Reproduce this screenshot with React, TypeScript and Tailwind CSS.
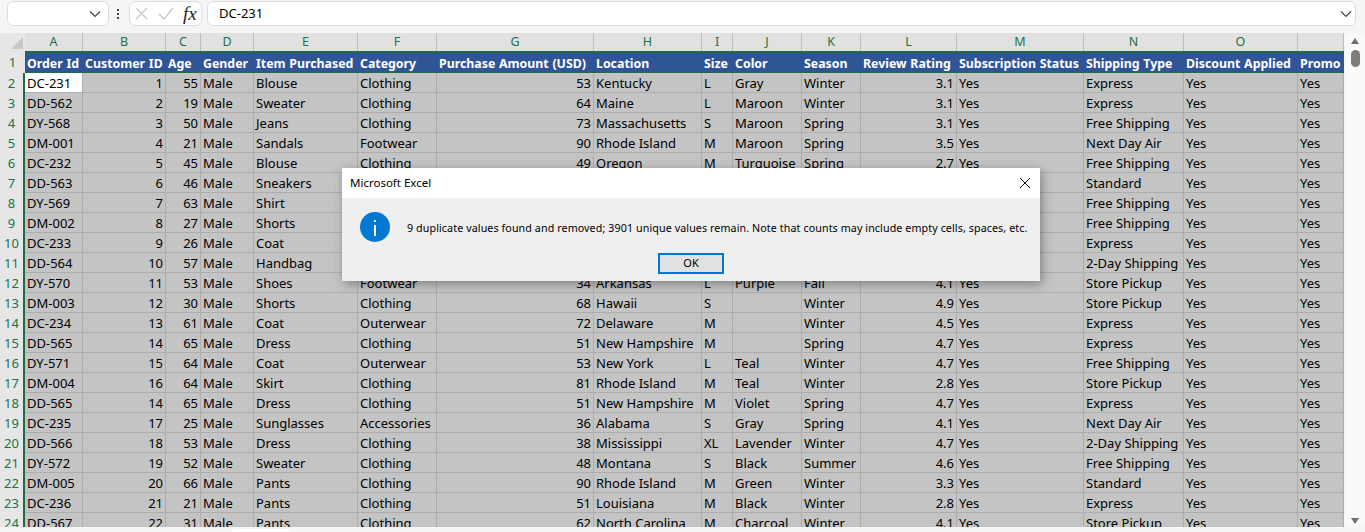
const cols = ['A','B','C','D','E','F','G','H','I','J','K','L','M','N','O',''];
const head = ['Order Id','Customer ID','Age','Gender','Item Purchased','Category','Purchase Amount (USD)','Location','Size','Color','Season','Review Rating','Subscription Status','Shipping Type','Discount Applied','Promo'];
const right = [1,2,6,11];
const rows: string[][] = [
['DC-231','1','55','Male','Blouse','Clothing','53','Kentucky','L','Gray','Winter','3.1','Yes','Express','Yes','Yes'],
['DD-562','2','19','Male','Sweater','Clothing','64','Maine','L','Maroon','Winter','3.1','Yes','Express','Yes','Yes'],
['DY-568','3','50','Male','Jeans','Clothing','73','Massachusetts','S','Maroon','Spring','3.1','Yes','Free Shipping','Yes','Yes'],
['DM-001','4','21','Male','Sandals','Footwear','90','Rhode Island','M','Maroon','Spring','3.5','Yes','Next Day Air','Yes','Yes'],
['DC-232','5','45','Male','Blouse','Clothing','49','Oregon','M','Turquoise','Spring','2.7','Yes','Free Shipping','Yes','Yes'],
['DD-563','6','46','Male','Sneakers','','','','','','','','','Standard','Yes','Yes'],
['DY-569','7','63','Male','Shirt','','','','','','','','','Free Shipping','Yes','Yes'],
['DM-002','8','27','Male','Shorts','','','','','','','','','Free Shipping','Yes','Yes'],
['DC-233','9','26','Male','Coat','','','','','','','','','Express','Yes','Yes'],
['DD-564','10','57','Male','Handbag','','','','','','','','','2-Day Shipping','Yes','Yes'],
['DY-570','11','53','Male','Shoes','Footwear','34','Arkansas','L','Purple','Fall','4.1','Yes','Store Pickup','Yes','Yes'],
['DM-003','12','30','Male','Shorts','Clothing','68','Hawaii','S','','Winter','4.9','Yes','Store Pickup','Yes','Yes'],
['DC-234','13','61','Male','Coat','Outerwear','72','Delaware','M','','Winter','4.5','Yes','Express','Yes','Yes'],
['DD-565','14','65','Male','Dress','Clothing','51','New Hampshire','M','','Spring','4.7','Yes','Express','Yes','Yes'],
['DY-571','15','64','Male','Coat','Outerwear','53','New York','L','Teal','Winter','4.7','Yes','Free Shipping','Yes','Yes'],
['DM-004','16','64','Male','Skirt','Clothing','81','Rhode Island','M','Teal','Winter','2.8','Yes','Store Pickup','Yes','Yes'],
['DD-565','14','65','Male','Dress','Clothing','51','New Hampshire','M','Violet','Spring','4.7','Yes','Express','Yes','Yes'],
['DC-235','17','25','Male','Sunglasses','Accessories','36','Alabama','S','Gray','Spring','4.1','Yes','Next Day Air','Yes','Yes'],
['DD-566','18','53','Male','Dress','Clothing','38','Mississippi','XL','Lavender','Winter','4.7','Yes','2-Day Shipping','Yes','Yes'],
['DY-572','19','52','Male','Sweater','Clothing','48','Montana','S','Black','Summer','4.6','Yes','Free Shipping','Yes','Yes'],
['DM-005','20','66','Male','Pants','Clothing','90','Rhode Island','M','Green','Winter','3.3','Yes','Standard','Yes','Yes'],
['DC-236','21','21','Male','Pants','Clothing','51','Louisiana','M','Black','Winter','2.8','Yes','Express','Yes','Yes'],
['DD-567','22','31','Male','Pants','Clothing','62','North Carolina','M','Charcoal','Winter','4.1','Yes','Store Pickup','Yes','Yes'],
];
const grid = 'grid grid-cols-[25px_58px_83px_35px_53px_104px_79px_157px_108px_31px_69px_59px_96px_127px_100px_114px_46px]';

export default function App() {
  return (
    <div className="relative h-[532px] w-[1365px] overflow-hidden bg-[#f5f5f5] text-[13px] text-black" style={{ fontFamily: '"Noto Sans", sans-serif' }}>
      <div className="flex h-[33px] items-start pt-px">
        <div className="ml-[7px] flex h-[25px] w-[102px] items-center justify-end rounded-md border border-[#dcdcdc] bg-white pr-[7px]">
          <svg width="12" height="8" viewBox="0 0 12 8" fill="none" stroke="#444" strokeWidth="1.2"><path d="M1 1.5l5 5 5-5" /></svg>
        </div>
        <div className="ml-[5px] flex h-[25px] w-[8px] flex-col items-center justify-center gap-[2px]">
          <i className="h-[2px] w-[2px] bg-[#444]" /><i className="h-[2px] w-[2px] bg-[#444]" /><i className="h-[2px] w-[2px] bg-[#444]" />
        </div>
        <div className="ml-[7px] flex h-[25px] w-[73px] items-center rounded-md border border-[#dcdcdc] bg-white pl-[5px]">
          <svg width="13" height="13" viewBox="0 0 13 13" fill="none" stroke="#c4c4c4" strokeWidth="1.2"><path d="M1 1l11 11M12 1L1 12" /></svg>
          <svg className="ml-[10px]" width="16" height="13" viewBox="0 0 16 13" fill="none" stroke="#c4c4c4" strokeWidth="1.2"><path d="M1 7l5 5L15 1" /></svg>
          <span className="ml-[9px] text-[19px] leading-none text-[#222]" style={{ fontFamily: '"Liberation Serif", serif', fontStyle: 'italic' }}>fx</span>
        </div>
        <div className="ml-[5px] flex h-[25px] w-[1149px] items-center justify-between rounded-md border border-[#dcdcdc] bg-white pl-[11px] pr-[3px]">
          <span className="text-[13px]">DC-231</span>
          <svg width="12" height="8" viewBox="0 0 12 8" fill="none" stroke="#444" strokeWidth="1.2"><path d="M1 1.5l5 5 5-5" /></svg>
        </div>
      </div>
      <div className="flex h-[494px] items-start">
        <div className="h-[494px] w-[1344px] shrink-0 overflow-hidden">
          <div className={`${grid} h-[18px] bg-[#e1e1e1] text-[#217346]`}>
            <div className="flex items-end justify-end bg-[#e6e6e6] pb-[2px] pr-[2px]">
              <div className="h-0 w-0 border-b-[12px] border-l-[12px] border-b-[#c8c8c8] border-l-transparent" />
            </div>
            {cols.map((c, i) => (
              <div key={i} className="flex items-center justify-center border-r border-[#bdbdbd] text-[12.5px] leading-none">{c}</div>
            ))}
          </div>
          <div className={`${grid} h-[22px] border-t-2 border-b border-t-[#1f6b45] border-b-[#1f6b45] bg-[#2f5597] text-[12.35px] font-bold leading-[21px] text-white [word-spacing:0.5px]`}>
            <div className="-mt-[2px] -mb-px flex h-[22px] items-center justify-center bg-[#e6e6e6] pt-[1px] text-[13px] font-normal text-[#217346]">1</div>
            {head.map((h, i) => (
              <div key={i} className="overflow-hidden whitespace-nowrap px-[2px]">{h}</div>
            ))}
          </div>
          {rows.map((r, ri) => (
            <div key={ri} className={`${grid} h-[20px] leading-[20px]`}>
              <div className="flex items-center justify-center border-r-2 border-[#1f6b45] bg-[#e6e6e6] text-[#217346]">{ri + 2}</div>
              {r.map((v, i) => (
                <div key={i} className={`overflow-hidden whitespace-nowrap border-b border-r border-[#adadad] px-[2px] ${ri === 0 && i === 0 ? 'bg-white' : 'bg-[#c4c4c4]'} ${right.includes(i) ? 'text-right' : ''}`}>{v}</div>
              ))}
            </div>
          ))}
        </div>
        <div className="ml-[1px] flex h-[494px] w-[20px] flex-col items-center rounded-md bg-[#fafafa] pt-[5px]">
          <div className="h-0 w-0 border-x-[4px] border-b-[6px] border-x-transparent border-b-[#6e6e6e]" />
          <div className="mt-[6px] h-[17px] w-[9px] rounded-full bg-[#7d7d7d]" />
          <div className="mt-auto mb-[3px] h-0 w-0 border-x-[4px] border-t-[6px] border-x-transparent border-t-[#6e6e6e]" />
        </div>
      </div>
      <div className="flex h-[5px] items-end">
        <div className="ml-[232px] h-[3px] w-[58px] rounded-t-sm bg-white" />
      </div>
      <div className="absolute left-[342px] top-[168px] h-[113px] w-[698px] bg-[#efefef] shadow-[2px_3px_10px_rgba(0,0,0,0.35)]">
        <div className="flex h-[30px] items-center justify-between bg-white pl-[8px] pr-[9px] text-[11.5px]">
          <span>Microsoft Excel</span>
          <svg width="12" height="12" viewBox="0 0 12 12" fill="none" stroke="#111" strokeWidth="1"><path d="M1 1l10 10M11 1L1 11" /></svg>
        </div>
        <div className="flex items-center pl-[18px] pt-[14px]">
          <svg width="30" height="30" viewBox="0 0 30 30"><circle cx="15" cy="15" r="15" fill="#0078d4" /><rect x="14" y="13" width="2" height="11" fill="#fff" /><rect x="14" y="8" width="2" height="2" fill="#fff" /></svg>
          <span className="ml-[17px] mt-[2px] text-[10.7px] tracking-[0.1px]">9 duplicate values found and removed; 3901 unique values remain. Note that counts may include empty cells, spaces, etc.</span>
        </div>
        <div className="flex pl-[316px] pt-[11px]">
          <div className="flex h-[21px] w-[66px] items-center justify-center border-2 border-[#0078d4] bg-[#e1e1e1] text-[11px]">OK</div>
        </div>
      </div>
    </div>
  );
}
